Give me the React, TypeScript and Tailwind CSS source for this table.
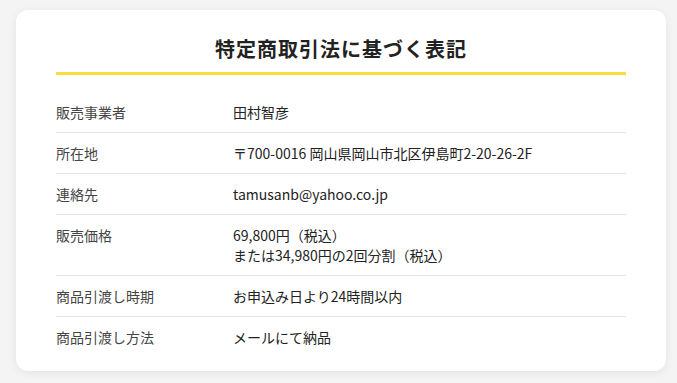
const rows: { label: string; value: string[] }[] = [
  { label: "販売事業者", value: ["田村智彦"] },
  { label: "所在地", value: ["〒700-0016 岡山県岡山市北区伊島町2-20-26-2F"] },
  { label: "連絡先", value: ["tamusanb@yahoo.co.jp"] },
  { label: "販売価格", value: ["69,800円（税込）", "または34,980円の2回分割（税込）"] },
  { label: "商品引渡し時期", value: ["お申込み日より24時間以内"] },
  { label: "商品引渡し方法", value: ["メールにて納品"] },
];

export default function App() {
  return (
    <div className="min-h-[383px] bg-[#f4f4f4] pt-[10px] pl-4 font-['Noto_Sans_CJK_JP','Noto_Sans',sans-serif]">
      <div className="w-[650px] rounded-xl bg-white px-10 pt-[25px] pb-[14px] shadow-[0_2px_8px_rgba(0,0,0,0.07)]">
        <h1 className="border-b-[3px] border-[#fcdb3a] pb-[9px] text-center text-xl leading-7 font-bold tracking-wider text-[#222]">
          特定商取引法に基づく表記
        </h1>
        <dl className="mt-[17px]">
          {rows.map((row, i) => (
            <div
              key={row.label}
              className={`flex items-start py-[10px] text-sm leading-5 ${
                i < rows.length - 1 ? "border-b border-[#e5e5e5]" : ""
              }`}
            >
              <dt className="w-[177px] shrink-0 text-[#444]">{row.label}</dt>
              <dd className="text-[#222]">
                {row.value.map((line) => (
                  <div key={line}>{line}</div>
                ))}
              </dd>
            </div>
          ))}
        </dl>
      </div>
    </div>
  );
}
